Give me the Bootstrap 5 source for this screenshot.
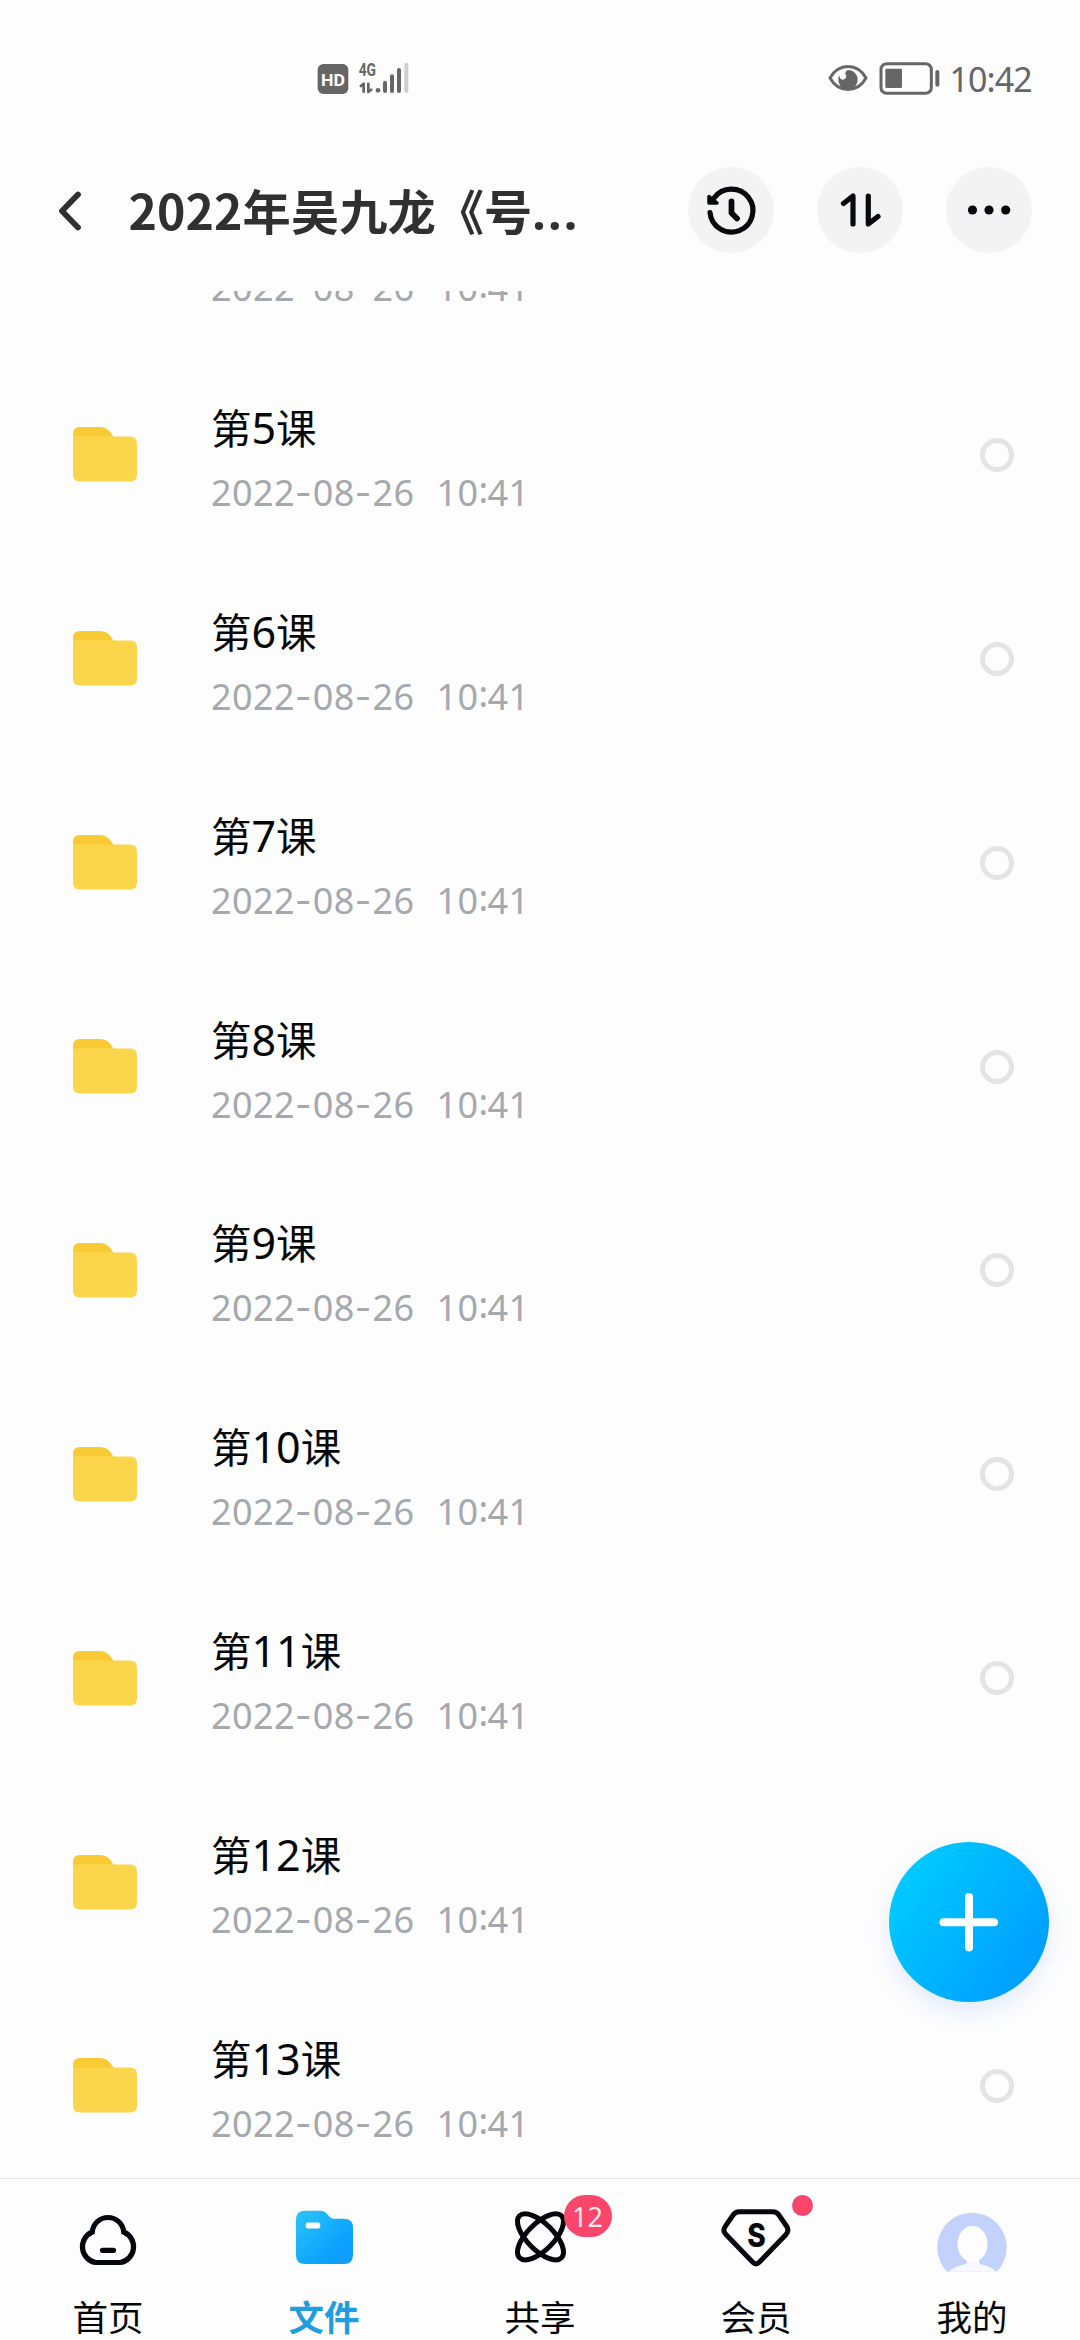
<!DOCTYPE html>
<html lang="zh-CN">
<head>
<meta charset="utf-8">
<meta name="viewport" content="width=device-width, initial-scale=1">
<title>文件</title>
<link href="https://cdn.jsdelivr.net/npm/bootstrap@5.3.0/dist/css/bootstrap.min.css" rel="stylesheet">
<style>
  body { background: #fdfdfd; color: #050608; font-family: "Noto Sans", "Noto Sans CJK SC", sans-serif; }
  svg { display: block; flex: none; }
  .screen { height: 2340px; width: 1080px; }
  .status-bar { height: 130px; padding: 50px 0 0 300px; color: #666; }
  .status-right { margin-left: 380px; }
  .clock-text { font-size: 34px; line-height: 59px; letter-spacing: -.9px; margin-left: 6.500px; }
  .title-bar { height: 161px; padding: 36.5px 48px 0 48px; }
  .title-text { font: 700 48.2px/84px "Noto Sans CJK SC", sans-serif; color: #303030; padding-left: 44.5px; letter-spacing: .1px; }
  .dots-tail { font-family: "Noto Sans", sans-serif; letter-spacing: 2.2px; }
  .round-btn { width: 86px; height: 86px; background: #f3f3f4; color: #08090d; }
  .file-list { height: 1887px; }
  .file-scroll { margin-top: -142px; }
  .file-row { height: 203.9px; padding: 0 66px 0 73px; flex: none; }
  .file-info { margin-left: 74px; padding-top: 7px; }
  .file-name { font-size: 40.5px; line-height: 56px; font-family: "Noto Sans CJK SC", sans-serif; }
  .file-name span { font: 400 43px/56px "Noto Sans", sans-serif; }
  .file-date { font-size: 36px; line-height: 50px; color: #a5a8ad; letter-spacing: .4px; margin-top: 12px; white-space: pre; }
  .file-date .dash { font-family: Inter, sans-serif; font-weight: 400; letter-spacing: 1.2px; }
  .file-date .colon { position: relative; top: -3px; letter-spacing: -.8px; }
  .file-date .gap-space { letter-spacing: 1.7px; }
  .pick { width: 34px; height: 34px; border: 5px solid #e4e4e5; }
  .tab-bar { height: 162px; border-top: 1px solid #e6e6e7; background: #fdfdfd; }
  .tab-item { width: 216px; padding-top: 16px; }
  .tab-label { font: 400 35.5px/50px "Noto Sans CJK SC", sans-serif; margin-top: 16px; }
  .tab-item.active .tab-label { color: #1f9dde; font-weight: 700; }
  .count-badge { left: 131.5px; top: 15.5px; width: 48px; height: 42px; border-radius: 21px; background: #fa466b; color: #ffe9ee; font-size: 27px; line-height: 43px; }
  .dot-badge { left: 143.5px; top: 16px; width: 21px; height: 21px; background: #fa466b; }
  .fab { left: 889px; top: 1842px; width: 160px; height: 160px; background: linear-gradient(125deg, #00ccff 10%, #0099ff 95%); box-shadow: 0 10px 22px rgba(40,110,255,.13); }
</style>
</head>
<body>
<div class="screen d-flex flex-column position-relative overflow-hidden">
  <div class="status-bar d-flex align-items-start flex-shrink-0">
    <svg width="130" height="60" viewBox="0 0 390 180" fill="#666">
      <rect x="53" y="42" width="92" height="90" rx="17"/>
      <text x="63" y="108" font-family="Roboto" font-weight="700" font-size="52" fill="#fff" textLength="72" lengthAdjust="spacingAndGlyphs">HD</text>
      <text x="176" y="79" font-family="Roboto" font-weight="700" font-size="56" textLength="52" lengthAdjust="spacingAndGlyphs">4G</text>
      <path d="M180 110l11-9v27M205 98v28l11-9" fill="none" stroke="#666" stroke-width="8" stroke-linejoin="round"/>
      <circle cx="234" cy="121" r="7"/>
      <path d="M255 98v25M276 79v44M297 60v63" stroke="#666" stroke-width="12" stroke-linecap="round"/>
      <path d="M319 44v79" stroke="#cfcfcf" stroke-width="12" stroke-linecap="round"/>
    </svg>
    <svg class="status-right" width="133" height="60" viewBox="0 0 399 180">
      <path d="M60 84C86 38 142 38 168 84C142 130 86 130 60 84Z" fill="none" stroke="#666" stroke-width="9" stroke-linejoin="round"/>
      <path d="M88 76Q90 93 103 88Q113 82 106 72Q104 66 113 60A29 29 0 1 1 88 76Z" fill="#666"/>
      <rect x="213" y="41" width="151" height="89" rx="17" fill="none" stroke="#666" stroke-width="9"/>
      <rect x="226" y="56" width="50" height="58" rx="4" fill="#666"/>
      <path d="M382 66v38" stroke="#666" stroke-width="12" stroke-linecap="round"/>
    </svg>
    <div class="clock-text">10:42</div>
  </div>

  <header class="title-bar d-flex align-items-start flex-shrink-0">
    <svg width="36" height="86" viewBox="48 166.5 36 86"><path d="M78 194L62 210.500L78 227" fill="none" stroke="#303030" stroke-width="5.800" stroke-linecap="round" stroke-linejoin="round"/></svg>
    <div class="title-text text-nowrap">2022年吴九龙《号<span class="dots-tail">...</span></div>
    <div class="d-flex ms-auto" style="gap:43px">
      <div class="round-btn rounded-circle">
        <svg width="86" height="86" fill="none" stroke="currentColor" stroke-width="5.200" stroke-linecap="round" stroke-linejoin="round">
          <path d="M22 45.500A21.500 21.500 0 1 0 26 31"/><path d="M43.500 34.500V46L49 51.500" stroke-width="5.800"/>
          <path d="M21 29.500V36H29Z" fill="currentColor" stroke-width="3.500"/>
        </svg>
      </div>
      <div class="round-btn rounded-circle">
        <svg width="86" height="86" fill="none" stroke="currentColor" stroke-width="5.200" stroke-linecap="round" stroke-linejoin="round"><path d="M26.500 36.500L36 29V57M51.300 29V57L61 49.500"/></svg>
      </div>
      <div class="round-btn rounded-circle">
        <svg width="86" height="86" fill="currentColor"><circle cx="26.500" cy="43" r="4.600"/><circle cx="43" cy="43" r="4.600"/><circle cx="59.700" cy="43" r="4.600"/></svg>
      </div>
    </div>
  </header>

  <main class="file-list overflow-hidden flex-shrink-0"><div class="file-scroll d-flex flex-column" id="files"></div></main>

  <nav class="tab-bar d-flex flex-shrink-0">
    <div class="tab-item position-relative d-flex flex-column align-items-center">
      <svg width="100" height="80" fill="none" stroke="#06070d" stroke-width="5.200" stroke-linejoin="miter"><path d="M37.500 67.500A16 16 0 0 1 34.300 37A15.750 15.750 0 0 1 65.700 37A16 16 0 0 1 62.500 67.500Z"/><path d="M44.500 55.300H55.500" stroke-linecap="round"/></svg>
      <div class="tab-label">首页</div>
    </div>
    <div class="tab-item active position-relative d-flex flex-column align-items-center">
      <svg width="100" height="80"><defs><linearGradient id="blue" x1="0" y1="0" x2="1" y2="1"><stop offset="0" stop-color="#2bc4f8"/><stop offset=".7" stop-color="#0ba2fd"/><stop offset="1" stop-color="#149cf8"/></linearGradient></defs>
        <path d="M31 15.700H46Q51 15.700 54 20Q56.500 23.700 60 23.700H70Q79 23.700 79 32.500V60Q79 69 70 69H31Q22 69 22 60V24.700Q22 15.700 31 15.700Z" fill="url(#blue)"/><rect x="31.700" y="27.500" width="14.500" height="6" rx="2" fill="#fff"/></svg>
      <div class="tab-label">文件</div>
    </div>
    <div class="tab-item position-relative d-flex flex-column align-items-center">
      <svg width="100" height="80" fill="none" stroke="#06070d" stroke-width="5"><ellipse cx="50.500" cy="41.800" rx="29.700" ry="13.300" transform="rotate(45 50.500 41.800)"/><ellipse cx="50.500" cy="41.800" rx="29.700" ry="13.300" transform="rotate(-45 50.500 41.800)"/></svg>
      <span class="count-badge position-absolute text-center">12</span>
      <div class="tab-label">共享</div>
    </div>
    <div class="tab-item position-relative d-flex flex-column align-items-center">
      <svg width="100" height="80"><path d="M33 16.700H67Q70.500 16.700 72.500 19.500L80.500 31Q83.500 35.500 80 39.500L53.500 67Q50 70.500 46.500 67L20 39.500Q16 35.500 19.500 31L27.500 19.500Q29.500 16.700 33 16.700Z" fill="none" stroke="#06070d" stroke-width="5"/><text x="50.500" y="51.500" text-anchor="middle" font-family="Inter" font-weight="800" font-size="32" textLength="18.500" lengthAdjust="spacingAndGlyphs" fill="#06070d">S</text></svg>
      <span class="dot-badge position-absolute rounded-circle"></span>
      <div class="tab-label">会员</div>
    </div>
    <div class="tab-item position-relative d-flex flex-column align-items-center">
      <svg width="100" height="80"><defs><clipPath id="face"><rect width="100" height="76.700"/></clipPath></defs><g clip-path="url(#face)"><circle cx="50" cy="52.500" r="34.800" fill="#c3d2fb"/><path d="M26 77Q33 71 44 69L46 63H56L58 69Q68 71 75 77Z" fill="#f6f7ff"/><ellipse cx="50.500" cy="49" rx="15" ry="18" fill="#fdfdfe"/></g></svg>
      <div class="tab-label">我的</div>
    </div>
  </nav>

  <div class="fab position-absolute rounded-circle">
    <svg width="160" height="160" stroke="#fff" stroke-width="8" stroke-linecap="round"><path d="M80 55V105.500M54.500 80.300H105"/></svg>
  </div>
</div>
<script>
  const folder = '<svg width="64" height="55"><path d="M7 0H27Q34 0 38 6L42 12V20H0V7Q0 0 7 0Z" fill="#f8ca33"/><path d="M0 9.500H57Q64 9.500 64 16.500V47.500Q64 54.500 57 54.500H7Q0 54.500 0 47.500Z" fill="#fbd64d"/></svg>';
  const stamp = '2022-08-26  10:41'.replace(/-/g, '<span class="dash">-</span>').replace('  ', '<span class="gap-space">  </span>').replace(':', '<span class="colon">:</span>');
  let rows = '';
  for (let n = 4; n <= 13; n++) {
    // the lesson above the fold shows only the lower part of its date
    const name = n === 4 ? '&nbsp;' : `第<span>${n}</span>课`;
    rows += `<div class="file-row d-flex align-items-center">${folder}<div class="file-info"><div class="file-name">${name}</div><div class="file-date">${stamp}</div></div><span class="pick rounded-circle ms-auto"></span></div>`;
  }
  document.getElementById('files').innerHTML = rows;
</script>
<script src="https://cdn.jsdelivr.net/npm/bootstrap@5.3.0/dist/js/bootstrap.bundle.min.js"></script>
</body>
</html>
